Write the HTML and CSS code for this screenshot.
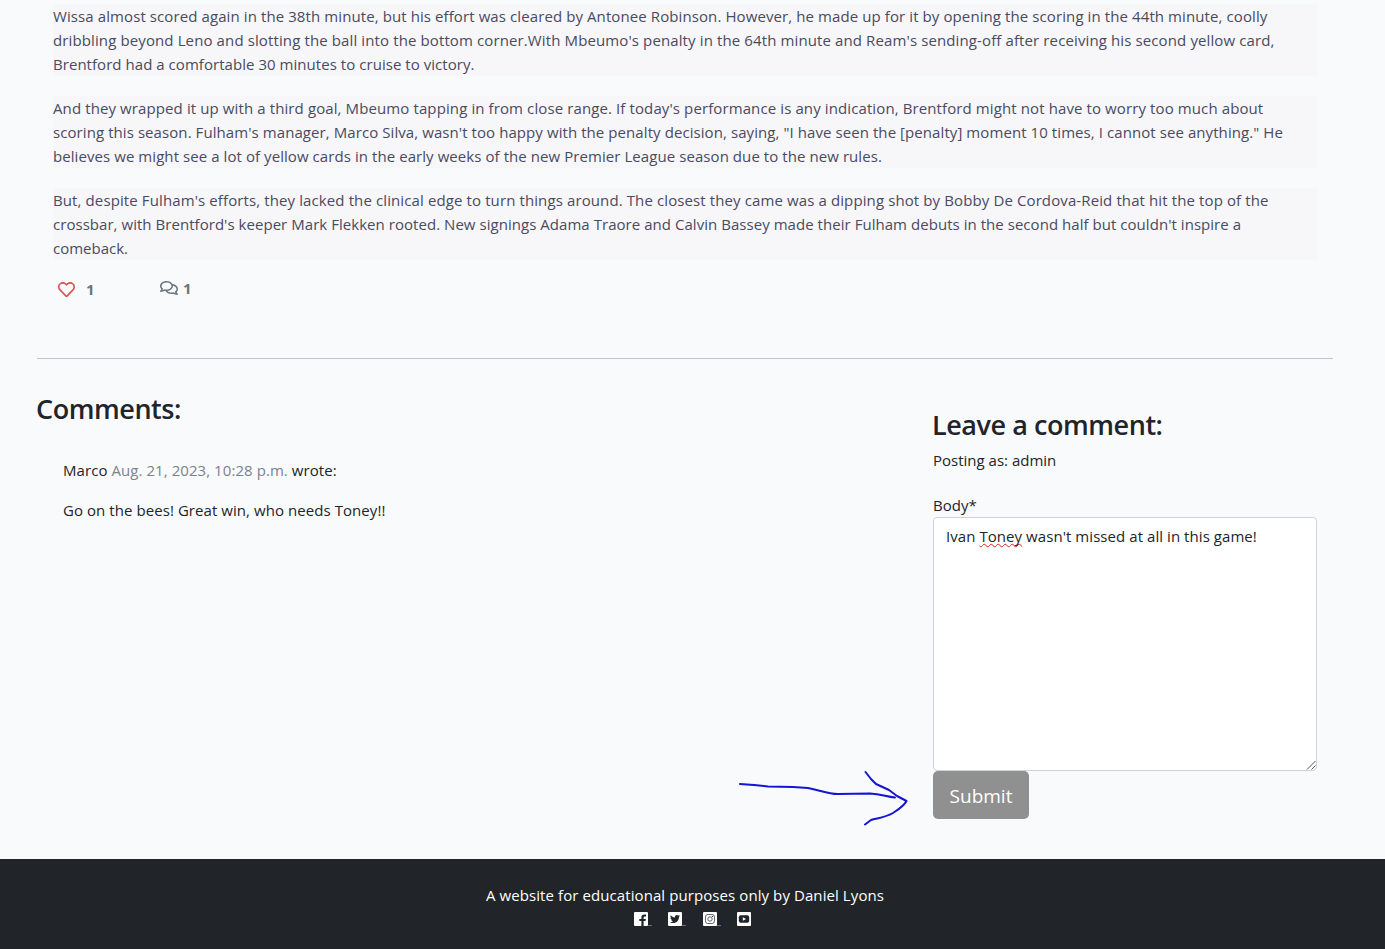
FILE: index.html
```html
<!DOCTYPE html>
<html lang="en">
<head>
<meta charset="utf-8">
<title>Match report</title>
<link rel="stylesheet" href="styles.css">
</head>
<body>
<main class="page">
  <article class="article">
    <p><span class="line l1">Wissa almost scored again in the 38th minute, but his effort was cleared by Antonee Robinson. However, he made up for it by opening the scoring in the 44th minute, coolly</span> <span class="line l2">dribbling beyond Leno and slotting the ball into the bottom corner.With Mbeumo's penalty in the 64th minute and Ream's sending-off after receiving his second yellow card,</span> <span class="line l3">Brentford had a comfortable 30 minutes to cruise to victory.</span></p>
    <p><span class="line l4">And they wrapped it up with a third goal, Mbeumo tapping in from close range. If today's performance is any indication, Brentford might not have to worry too much about</span> <span class="line l5">scoring this season. Fulham's manager, Marco Silva, wasn't too happy with the penalty decision, saying, "I have seen the [penalty] moment 10 times, I cannot see anything." He</span> <span class="line l6">believes we might see a lot of yellow cards in the early weeks of the new Premier League season due to the new rules.</span></p>
    <p><span class="line l7">But, despite Fulham's efforts, they lacked the clinical edge to turn things around. The closest they came was a dipping shot by Bobby De Cordova-Reid that hit the top of the</span> <span class="line l8">crossbar, with Brentford's keeper Mark Flekken rooted. New signings Adama Traore and Calvin Bassey made their Fulham debuts in the second half but couldn't inspire a</span> <span class="line l9">comeback.</span></p>
  </article>
  <div class="stats">
    <span class="likes"><svg class="heart" viewBox="0 0 512 512"><path d="M458.400 64.300C400.600 15.700 311.300 23 256 79.300 200.700 23 111.400 15.600 53.600 64.300-21.600 127.600-10.600 230.800 43 285.500l175.400 178.700c10 10.200 23.400 15.900 37.600 15.900 14.300 0 27.600-5.600 37.600-15.800L469 285.600c53.500-54.700 64.700-157.900-10.600-221.300zm-23.600 187.500L259.400 430.500c-2.400 2.400-4.400 2.400-6.800 0L77.200 251.800c-36.500-37.200-43.900-107.600 7.300-150.700 38.900-32.700 98.900-27.800 136.500 10.500l35 35.700 35-35.700c37.800-38.500 97.800-43.200 136.500-10.600 51.100 43.100 43.500 113.900 7.300 150.800z"/></svg><b>1</b></span>
    <span class="replies"><svg class="chat" viewBox="0 0 576 512"><path d="M532 386.200c27.500-27.100 44-61.100 44-98.200 0-80-76.500-146.100-176.200-157.900C368.300 72.500 294.300 32 208 32 93.100 32 0 103.600 0 192c0 37 16.500 71 44 98.200-15.300 30.700-37.300 54.500-37.700 54.900-6.300 6.700-8.100 16.500-4.400 25 3.600 8.500 12 14 21.200 14 53.500 0 96.700-20.200 125.200-38.800 9.200 2.100 18.700 3.700 28.400 4.900C208.100 407.600 281.800 448 368 448c20.800 0 40.800-2.400 59.800-6.800C456.300 459.700 499.400 480 553 480c9.200 0 17.500-5.500 21.200-14 3.600-8.500 1.900-18.300-4.400-25-.4-.3-22.500-24.100-37.800-54.800zm-392.800-92.300L122.100 305c-14.100 9.100-28.500 16.300-43.100 21.400 2.700-4.700 5.400-9.700 8-14.800l15.500-31.100L77.700 256C64.200 242.600 48 220.700 48 192c0-60.700 73.300-112 160-112s160 51.300 160 112-73.300 112-160 112c-16.500 0-33-1.900-49-5.600l-19.800-4.500zM498.300 352l-24.700 24.400 15.500 31.100c2.600 5.100 5.300 10.100 8 14.800-14.600-5.100-29-12.300-43.100-21.400l-17.100-11.100-19.900 4.600c-16 3.700-32.500 5.600-49 5.600-54 0-102.200-20.100-131.300-49.700C338 339.500 416 272.900 416 192c0-3.400-.4-6.700-.7-10C479.700 196.500 528 238.800 528 288c0 28.700-16.200 50.600-29.700 64z"/></svg><b>1</b></span>
  </div>
  <hr>
  <div class="columns">
    <section class="comments">
      <h3>Comments:</h3>
      <div class="comment">
        <p>Marco <span class="muted">Aug. 21, 2023, 10:28 p.m.</span> wrote:</p>
        <p>Go on the bees! Great win, who needs Toney!!</p>
      </div>
    </section>
    <section class="reply">
      <h3>Leave a comment:</h3>
      <div class="posting">Posting as: admin</div>
      <div class="label">Body*</div>
      <div class="field">Ivan <span class="misspelt">Toney</span> wasn't missed at all in this game!
        <svg class="grip" viewBox="0 0 10 10"><path d="M1 9.500L9.500 1M5.500 9.500L9.500 5.500"/></svg>
      </div>
      <button class="submit">Submit</button>
      <svg class="arrow" viewBox="0 0 190 75"><path d="M10 24L24 25 38 26.500 63 27 78 28C90 30 97 34 108 34L140 33.500C151 34 156 36.500 165 37.500M135.500 12L141 19 146 24 159 30 167 36 176.500 41C174 46 169 49 163 53 154 58 147 58 141 60L135 64.500"/></svg>
    </section>
  </div>
</main>
<footer class="footer">
  <div class="credit">A website for educational purposes only by Daniel Lyons</div>
  <div class="social">
    <a><svg viewBox="0 0 14 14"><path fill-rule="evenodd" d="M1 0H13Q14 0 14 1V13Q14 14 13 14H9.600V9H11.500L11.900 6.900H9.600V5.500Q9.600 4.500 10.700 4.500H12V2.600L10.400 2.500Q7.400 2.500 7.400 5.300V6.900H5.300V9H7.400V14H1Q0 14 0 13V1Q0 0 1 0Z"/></svg></a>
    <a><svg viewBox="0 0 448 448"><path d="M418 0H30C12 0 0 12 0 30v388c0 18 12 30 30 30h388c18 0 30-12 30-30V30c0-18-12-30-30-30zm-66.900 158.800c.2 2.800.2 5.700.2 8.500 0 86.700-66 186.600-186.600 186.600-37.200 0-71.700-10.800-100.700-29.400 5.300.6 10.400.8 15.800.8 30.700 0 58.900-10.400 81.400-28-28.800-.6-53-19.500-61.300-45.500 10.100 1.500 19.200 1.500 29.600-1.200-30-6.100-52.500-32.500-52.500-64.400v-.8c8.700 4.900 18.900 7.900 29.600 8.300a65.447 65.447 0 0 1-29.200-54.600c0-12.200 3.200-23.400 8.900-33.100 32.300 39.800 80.800 65.800 135.200 68.600-9.300-44.500 24-80.600 64-80.600 18.900 0 35.900 7.900 47.900 20.700 14.800-2.800 29-8.300 41.600-15.800-4.900 15.200-15.200 28-28.800 36.100 13.200-1.400 26-5.100 37.800-10.200-8.900 13.100-20.100 24.700-32.900 34z"/></svg></a>
    <a><svg viewBox="0 0 14 14"><rect width="14" height="14" rx="1"/><g fill="none" stroke="#212529" stroke-width=".7"><rect x="2.500" y="2.500" width="9" height="9" rx="2.400"/><circle cx="7" cy="7" r="2.200"/></g><circle cx="9.600" cy="4.400" r=".55" fill="#212529"/></svg></a>
    <a class="last"><svg viewBox="0 0 14 14"><rect width="14" height="14" rx="1"/><rect x="1.800" y="3.200" width="10.400" height="7.600" rx="2" fill="#212529"/><path d="M5.800 5.200V8.800L9 7Z"/></svg></a>
  </div>
</footer>
</body>
</html>
```
FILE: styles.css
```css
* { box-sizing: border-box; }
body { margin: 0; background: #f9fafc; color: #212529; font: 15px/24px "Open Sans", "Noto Sans", sans-serif; }
.page { height: 859px; padding: 4px 52px 0 37px; }
p { margin: 0; }
.article { margin-left: 16px; width: 1264px; display: flex; flex-direction: column; gap: 20px; }
.article p { background: #f7f7f9; color: #4a4a60; height: 72px; }
.line { display: table; white-space: nowrap; }
.l1 { letter-spacing: .096px; }
.l2 { letter-spacing: .117px; }
.l3 { letter-spacing: .045px; }
.l4 { letter-spacing: .108px; }
.l5 { letter-spacing: .077px; }
.l6 { letter-spacing: .07px; }
.l7 { letter-spacing: .111px; }
.l8 { letter-spacing: .043px; }
.stats { display: flex; height: 58px; margin-left: 21px; align-items: center; color: #6c757d; }
.stats b { font-weight: 700; }
.likes, .replies { display: flex; align-items: center; }
.likes { width: 102px; gap: 11px; }
.replies { gap: 5px; padding-bottom: 2px; }
.heart { width: 17px; height: 17px; fill: #d9534f; }
.chat { width: 18px; height: 16px; fill: #6c757d; }
hr { width: 1296px; height: 1px; border: 0; margin: 40px 0 0; background: #c2c4c8; }
.columns { display: flex; width: 1296px; }
.comments { width: 896px; padding-top: 33px; }
h3 { margin: 0 0 0 -1px; font-size: 27px; line-height: 34px; font-weight: 600; letter-spacing: -.45px; }
.comment { padding: 32px 0 0 26px; display: flex; flex-direction: column; gap: 16px; letter-spacing: .065px; }
.muted { color: #7b838a; }
.reply { width: 384px; padding-top: 49px; position: relative; }
.posting { margin-top: 6px; height: 24px; }
.label { margin-top: 21px; height: 24px; }
.field { position: relative; height: 254px; border: 1px solid #ced4da; border-radius: 4px; background: #fff; padding: 6px 12px; letter-spacing: .06px; }
.misspelt { text-decoration: underline wavy #e02020 1px; text-underline-offset: 1px; text-decoration-skip-ink: none; }
.grip { position: absolute; right: 0; bottom: 0; width: 10px; height: 10px; fill: none; stroke: #555; stroke-width: 1; }
.submit { display: block; width: 96px; height: 48px; border: 0; border-radius: 5px; background: #909090; color: #fff; font: 19px/30px "Open Sans", sans-serif; padding: 2px 0 0; }
.arrow { position: absolute; left: -203px; top: 401px; width: 190px; height: 75px; fill: none; stroke: #1414d2; stroke-width: 2; stroke-linejoin: round; stroke-linecap: round; }
.footer { height: 90px; background: #212529; color: #fff; padding: 24px 15px 0 0; text-align: center; }
.credit { letter-spacing: .085px; }
.social { display: flex; margin: 5px 0 0 634px; gap: 16.400px; }
.social a { display: flex; width: 18px; height: 15px; background: linear-gradient(#2a7ae0, #2a7ae0) 14px 13px / 4px 1px no-repeat; }
.social .last { background: none; }
.social svg { width: 14px; height: 14px; fill: #fff; }
```
